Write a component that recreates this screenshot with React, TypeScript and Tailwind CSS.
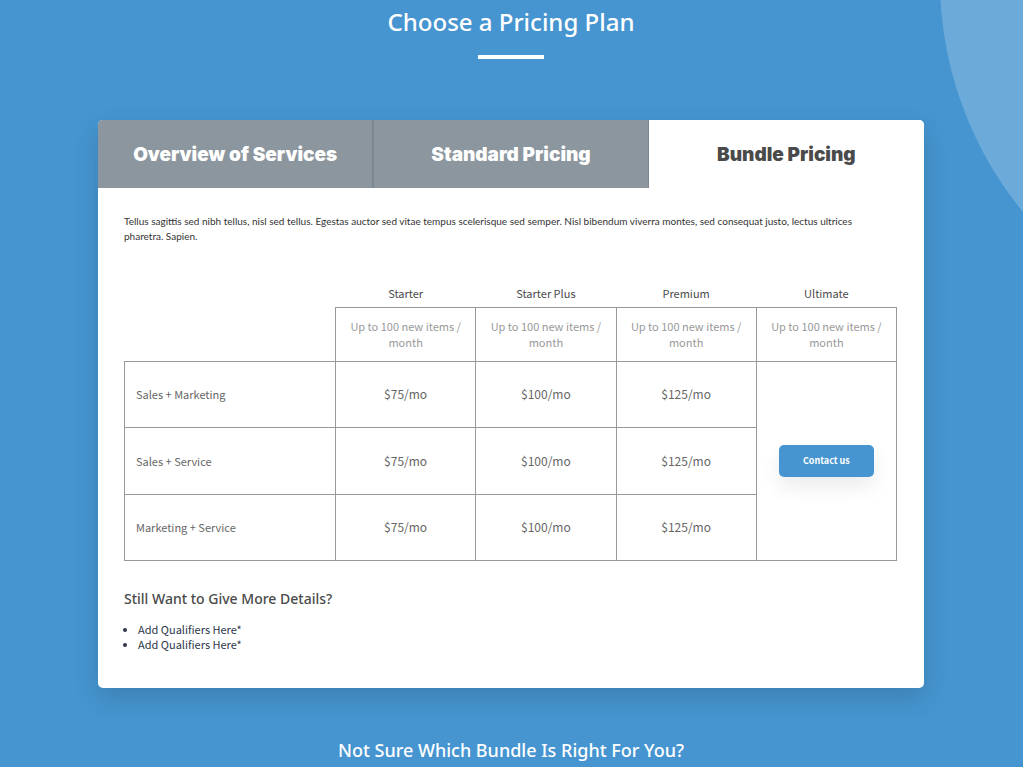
import React, { useState } from 'react';

const tabs = ['Overview of Services', 'Standard Pricing', 'Bundle Pricing'];

const plans = [
  { name: 'Starter', limit: 'Up to 100 new items / month' },
  { name: 'Starter Plus', limit: 'Up to 100 new items / month' },
  { name: 'Premium', limit: 'Up to 100 new items / month' },
  { name: 'Ultimate', limit: 'Up to 100 new items / month' },
];

const bundles = [
  { name: 'Sales + Marketing', prices: ['$75/mo', '$100/mo', '$125/mo'] },
  { name: 'Sales + Service', prices: ['$75/mo', '$100/mo', '$125/mo'] },
  { name: 'Marketing + Service', prices: ['$75/mo', '$100/mo', '$125/mo'] },
];

const qualifiers = ['Add Qualifiers Here*', 'Add Qualifiers Here*'];

export default function App() {
  const [activeTab, setActiveTab] = useState(2);

  return (
    <main className="relative min-h-screen overflow-hidden bg-[#4695d0] pl-[98px] pr-[99px] font-['Noto_Sans_CJK_JP','Open_Sans',sans-serif]">
      {/* Decorative circle */}
      <div className="absolute -top-[386px] -right-[649px] size-[732px] rounded-full bg-white/20" />

      <header className="flex flex-col items-center pt-1">
        <h1 className="text-center font-['Noto_Sans',sans-serif] text-2xl leading-9 font-medium text-white">
          Choose a Pricing Plan
        </h1>
        <div className="mt-[15px] h-1 w-[66px] bg-white" />
      </header>

      {/* Pricing card */}
      <section className="relative mt-[61px] overflow-hidden rounded-[5px] bg-white shadow-[0_10px_26px_rgba(0,0,0,0.15)]">
        <div role="tablist" className="grid grid-cols-3">
          {tabs.map((tab, index) => (
            <button
              key={tab}
              type="button"
              role="tab"
              aria-selected={index === activeTab}
              onClick={() => setActiveTab(index)}
              className={`h-[68px] border-[#7a8793] pt-0.5 font-['Inter',sans-serif] text-[19px] font-black ${
                index === 1 ? 'border-x' : index === 0 ? 'border-r' : ''
              } ${index === activeTab ? 'bg-white text-[#4a4a4a]' : 'bg-[#8b969e] text-white'}`}
            >
              {tab}
            </button>
          ))}
        </div>

        <div role="tabpanel" className="pt-[26px] pr-[27px] pb-9 pl-[26px]">
          <p className="pr-4 font-['Lato',sans-serif] text-[10px] leading-[15px] text-[#333]">
            Tellus sagittis sed nibh tellus, nisl sed tellus. Egestas auctor sed vitae tempus scelerisque sed semper.
            Nisl bibendum viverra montes, sed consequat justo, lectus ultrices pharetra. Sapien.
          </p>

          <table className="mt-9 w-full table-fixed border-collapse text-center text-[11px] leading-4 text-[#666]">
            <colgroup>
              <col className="w-[211px]" />
              <col />
              <col />
              <col />
              <col />
            </colgroup>
            <thead>
              <tr className="h-[27px] text-[#4a4a4a]">
                <td />
                {plans.map((plan) => (
                  <th key={plan.name} scope="col" className="align-middle font-normal">{plan.name}</th>
                ))}
              </tr>
            </thead>
            <tbody>
              <tr className="h-[54px]">
                <td />
                {plans.map((plan) => (
                  <td key={plan.name} className="border border-[#999] px-3 text-[#999]">{plan.limit}</td>
                ))}
              </tr>
              {bundles.map((bundle, index) => (
                <tr key={bundle.name} className={index === 1 ? 'h-[67px]' : 'h-[66px]'}>
                  <th scope="row" className="border border-[#999] px-[11px] text-left font-normal">{bundle.name}</th>
                  {bundle.prices.map((price) => (
                    <td key={price} className="border border-[#999] text-xs">{price}</td>
                  ))}
                  {index === 0 && (
                    <td rowSpan={3} className="border border-[#999]">
                      <a
                        href="#contact"
                        className="inline-block rounded-[5px] bg-[#4695d0] px-6 py-2 text-[9px] leading-4 font-bold text-white shadow-[0_10px_20px_rgba(0,0,0,0.08)]"
                      >
                        Contact us
                      </a>
                    </td>
                  )}
                </tr>
              ))}
            </tbody>
          </table>

          <h2 className="mt-7 font-['Noto_Sans',sans-serif] text-sm leading-5 font-medium text-[#4a4a4a]">
            Still Want to Give More Details?
          </h2>
          <ul className="mt-[13px] list-disc pl-[14px] text-[11px] leading-[15px] text-[#2d3748]">
            {qualifiers.map((qualifier, index) => (
              <li key={index}>{qualifier}</li>
            ))}
          </ul>
        </div>
      </section>

      <h2 className="mt-12 text-center font-['Noto_Sans',sans-serif] text-lg leading-7 font-medium text-white">
        Not Sure Which Bundle Is Right For You?
      </h2>
    </main>
  );
}
